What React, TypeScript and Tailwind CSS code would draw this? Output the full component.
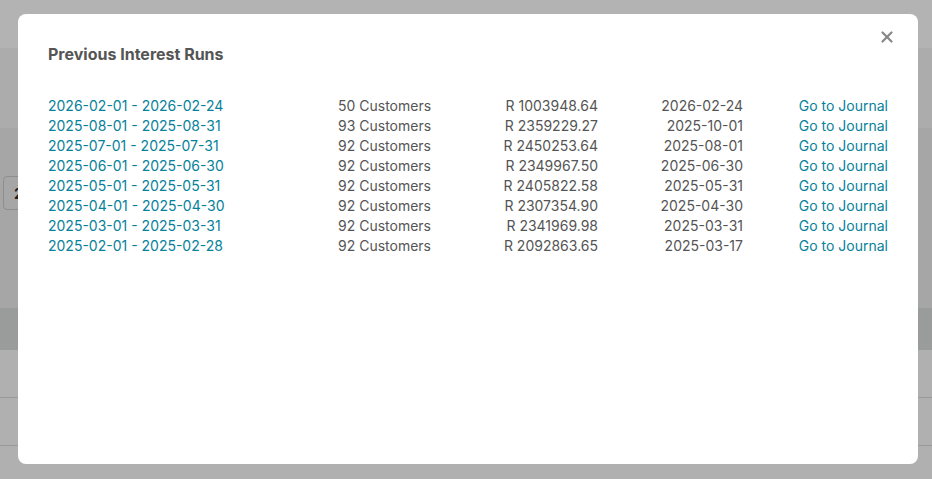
import { X } from 'lucide-react'

const RUNS = [
  { period: '2026-02-01 - 2026-02-24', customers: 50, amount: '1003948.64', date: '2026-02-24' },
  { period: '2025-08-01 - 2025-08-31', customers: 93, amount: '2359229.27', date: '2025-10-01' },
  { period: '2025-07-01 - 2025-07-31', customers: 92, amount: '2450253.64', date: '2025-08-01' },
  { period: '2025-06-01 - 2025-06-30', customers: 92, amount: '2349967.50', date: '2025-06-30' },
  { period: '2025-05-01 - 2025-05-31', customers: 92, amount: '2405822.58', date: '2025-05-31' },
  { period: '2025-04-01 - 2025-04-30', customers: 92, amount: '2307354.90', date: '2025-04-30' },
  { period: '2025-03-01 - 2025-03-31', customers: 92, amount: '2341969.98', date: '2025-03-31' },
  { period: '2025-02-01 - 2025-02-28', customers: 92, amount: '2092863.65', date: '2025-03-17' },
]

export default function App() {
  return (
    <div className="relative h-[479px] w-[932px] overflow-hidden bg-[#b0b0b0] font-['Inter',sans-serif]">
      {/* page behind the overlay */}
      <div className="flex h-full flex-col">
        <div className="h-[48px] bg-[#b3b3b3]" />
        <div className="h-[80px] bg-[#acacac]" />
        <div className="h-[180px] bg-[#a6a6a7] pl-[3px] pt-[48px]">
          <div className="flex h-[34px] w-[40px] items-center rounded-[4px] border border-[#8e8e8e] pl-[10px] text-[14px] font-bold text-[#222]">
            2
          </div>
        </div>
        <div className="h-[42px] bg-[#9a9c9b]" />
        <div className="h-[48px] border-b border-[#999] bg-[#b0b0b0]" />
        <div className="h-[48px] border-b border-[#999] bg-[#b0b0b0]" />
        <div className="flex-1 bg-[#b0b0b0]" />
      </div>

      {/* modal */}
      <div className="absolute left-[18px] top-[14px] h-[450px] w-[900px] rounded-[8px] bg-white px-[30px] pt-[28px]">
        <button className="absolute right-[22px] top-[14px] text-[#888]">
          <X size={18} strokeWidth={3} />
        </button>
        <h2 className="text-[16px] font-bold text-[#555]">Previous Interest Runs</h2>
        <div className="mt-[30px] grid grid-cols-[290px_130px_130px_145px_145px] text-[14px] leading-[20px]">
          {RUNS.map(r => (
            <div key={r.period} className="contents">
              <a className="text-[#06819a]">{r.period}</a>
              <span className="text-[#555]">{r.customers} Customers</span>
              <span className="text-right text-[#555]">R {r.amount}</span>
              <span className="text-right text-[#555]">{r.date}</span>
              <a className="text-right text-[#06819a]">Go to Journal</a>
            </div>
          ))}
        </div>
      </div>
    </div>
  )
}
